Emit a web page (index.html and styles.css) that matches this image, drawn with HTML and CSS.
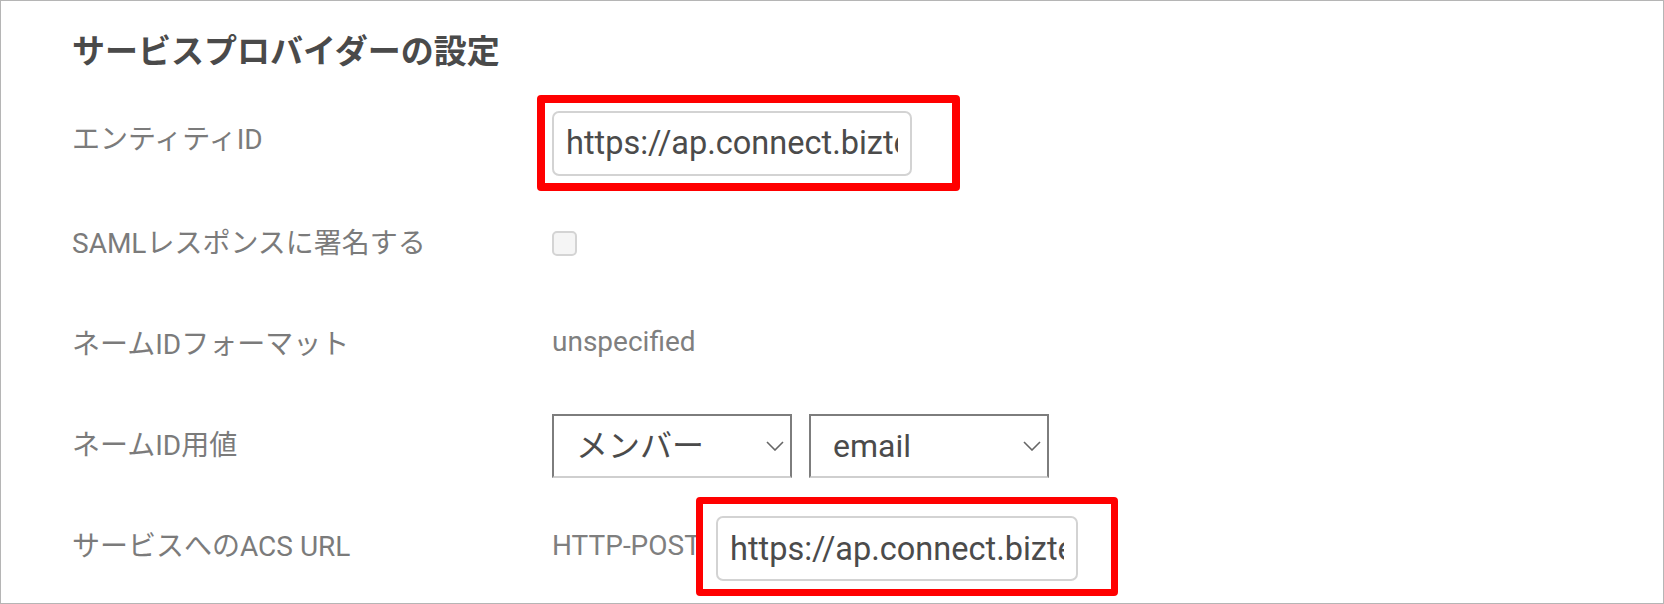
FILE: index.html
```html
<!DOCTYPE html>
<html lang="ja">

<head>
  <meta charset="UTF-8">
  <meta name="viewport" content="width=device-width, initial-scale=1.0">
  <title>サービスプロバイダーの設定</title>
  <link rel="stylesheet" href="styles.css">
</head>

<body>
  <div class="frame">
    <h2 class="section-title">サービスプロバイダーの設定</h2>

    <div class="form-row">
      <div class="form-label label-high">エンティティID</div>
      <div class="form-value">
        <span class="mark mark-entity">
          <input type="text" class="text-input" value="https://ap.connect.biztel.jp/saml/metadata">
        </span>
      </div>
    </div>

    <div class="form-row">
      <div class="form-label">SAMLレスポンスに署名する</div>
      <div class="form-value">
        <input type="checkbox" class="check">
      </div>
    </div>

    <div class="form-row">
      <div class="form-label">ネームIDフォーマット</div>
      <div class="form-value">
        <span class="plain">unspecified</span>
      </div>
    </div>

    <div class="form-row">
      <div class="form-label">ネームID用値</div>
      <div class="form-value selects">
        <div class="select-wrap">
          <select class="select">
            <option>メンバー</option>
          </select>
          <svg class="chevron" width="18" height="10" viewBox="0 0 18 10">
            <path d="M1 1 L9 9 L17 1" fill="none" stroke="#666" stroke-width="1.6"/>
          </svg>
        </div>
        <div class="select-wrap">
          <select class="select">
            <option>email</option>
          </select>
          <svg class="chevron" width="18" height="10" viewBox="0 0 18 10">
            <path d="M1 1 L9 9 L17 1" fill="none" stroke="#666" stroke-width="1.6"/>
          </svg>
        </div>
      </div>
    </div>

    <div class="form-row">
      <div class="form-label">サービスへのACS URL</div>
      <div class="form-value">
        <span class="plain binding">HTTP-POST</span>
        <span class="mark mark-acs">
          <input type="text" class="text-input wide" value="https://ap.connect.biztel.jp/saml/acs">
        </span>
      </div>
    </div>
  </div>
</body>

</html>
```

FILE: styles.css
```css
* {
  margin: 0;
  padding: 0;
  box-sizing: border-box;
}

body {
  background: #fff;
  font-family: Roboto, "Noto Sans CJK JP", sans-serif;
}

.frame {
  width: 1664px;
  height: 604px;
  border: 1px solid #b5b5b5;
  padding-left: 71px;
  overflow: hidden;
}

.section-title {
  margin: 31px 0 20px;
  font-size: 33px;
  line-height: 40px;
  font-weight: 700;
  color: #4a4a4a;
}

.form-row {
  display: grid;
  grid-template-columns: 480px auto;
  align-items: center;
  height: 101px;
}

.form-label {
  padding-bottom: 6px;
  font-size: 28px;
  color: #7b7b7b;
  white-space: nowrap;
}

.form-label.label-high {
  padding-bottom: 12px;
}

.form-value {
  display: flex;
  align-items: center;
}

.plain {
  padding-bottom: 6px;
  font-size: 28px;
  color: #7f7f7f;
}

.binding {
  width: 144px;
  padding-bottom: 2px;
  white-space: nowrap;
}

/* red highlight frames */
.mark {
  display: block;
  border: 8px solid #ff0000;
  border-radius: 4px;
}

.mark-entity {
  margin-left: -15px;
  padding: 8px 40px 7px 7px;
}

.mark-acs {
  border-width: 7px;
  padding: 12px 33px 8px 13px;
}

.text-input {
  display: block;
  width: 360px;
  height: 65px;
  padding: 0 12px;
  border: 2px solid #d3d3d3;
  border-radius: 7px;
  font-family: Roboto, "Noto Sans CJK JP", sans-serif;
  font-size: 32.5px;
  color: #4b4b4b;
  background: #fff;
  outline: none;
}

.text-input.wide {
  width: 362px;
}

.check {
  appearance: none;
  -webkit-appearance: none;
  display: block;
  width: 25px;
  height: 25px;
  border: 2px solid #d4d4d4;
  border-radius: 5px;
  background: #f5f5f5;
}

.selects {
  gap: 17px;
}

.select-wrap {
  position: relative;
}

.select {
  appearance: none;
  -webkit-appearance: none;
  display: block;
  width: 240px;
  height: 64px;
  padding: 0 40px 0 22px;
  border: 2px solid #7d7d7d;
  border-bottom-color: #cfcfcf;
  border-radius: 0;
  background: #fff;
  font-family: Roboto, "Noto Sans CJK JP", sans-serif;
  font-size: 32px;
  color: #4b4b4b;
}

.chevron {
  position: absolute;
  right: 8px;
  top: 27px;
  pointer-events: none;
}
```
